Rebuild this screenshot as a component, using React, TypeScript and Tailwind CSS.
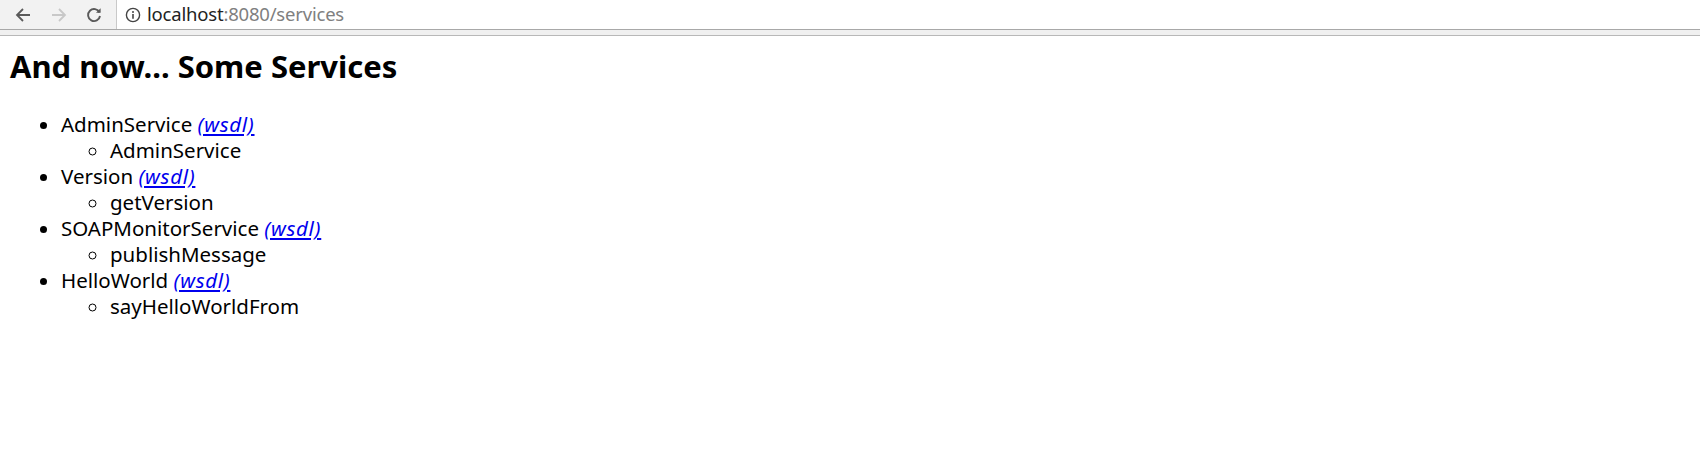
import React from "react";

const services = [
  { name: "AdminService", ops: ["AdminService"] },
  { name: "Version", ops: ["getVersion"] },
  { name: "SOAPMonitorService", ops: ["publishMessage"] },
  { name: "HelloWorld", ops: ["sayHelloWorldFrom"] },
];

export default function App() {
  return (
    <div className="w-[1700px] h-[450px] bg-white overflow-hidden" style={{ fontFamily: '"Noto Sans", "Open Sans", sans-serif' }}>
      {/* browser toolbar */}
      <div className="h-[29px] bg-[#f2f2f2] flex items-stretch">
        <div className="w-[116px] flex items-center">
          <svg width="18" height="18" viewBox="0 0 18 18" className="ml-[14px]">
            <path d="M16 9H3M9 3L3 9l6 6" stroke="#5a5a5a" strokeWidth="1.8" fill="none" />
          </svg>
          <svg width="18" height="18" viewBox="0 0 18 18" className="ml-[18px]">
            <path d="M2 9h13M9 3l6 6-6 6" stroke="#c8c8c8" strokeWidth="1.8" fill="none" />
          </svg>
          <svg width="18" height="18" viewBox="0 0 18 18" className="ml-[17px]">
            <path d="M14.5 6.5A6 6 0 1 0 15 10" stroke="#5a5a5a" strokeWidth="1.9" fill="none" />
            <path d="M11 6.8h4.6V2.2z" fill="#5a5a5a" />
          </svg>
        </div>
        <div className="flex-1 bg-white border-l border-[#c9c9c9] flex items-center pl-[8px]">
          <svg width="16" height="16" viewBox="0 0 16 16">
            <circle cx="8" cy="8" r="6.6" stroke="#444" strokeWidth="1.4" fill="none" />
            <circle cx="8" cy="4.9" r="1" fill="#444" />
            <path d="M8 7v4.8" stroke="#444" strokeWidth="1.6" />
          </svg>
          <span className="ml-[6px] text-[18.5px] leading-none text-[#222] tracking-[-0.2px]">
            localhost<span className="text-[#808080]">:8080/services</span>
          </span>
        </div>
      </div>
      <div className="h-[1px] bg-[#a8a8a8]" />
      <div className="h-[5px] bg-[#f0f0f0]" />
      <div className="h-[1px] bg-[#b8b8b8]" />

      <div className="pl-[10px] text-black">
        <h1 className="text-[31px] font-bold leading-none mt-[15px]">And now... Some Services</h1>
        <ul className="list-disc pl-[51px] mt-[29px] text-[20.5px] leading-[26px]">
          {services.map((s) => (
            <li key={s.name}>
              {s.name}{" "}
              <a href="#" className="italic underline text-[#0000ee] tracking-[0.7px]">(wsdl)</a>
              <ul className="list-[circle] pl-[49px]">
                {s.ops.map((o) => (
                  <li key={o}>{o}</li>
                ))}
              </ul>
            </li>
          ))}
        </ul>
      </div>
    </div>
  );
}
